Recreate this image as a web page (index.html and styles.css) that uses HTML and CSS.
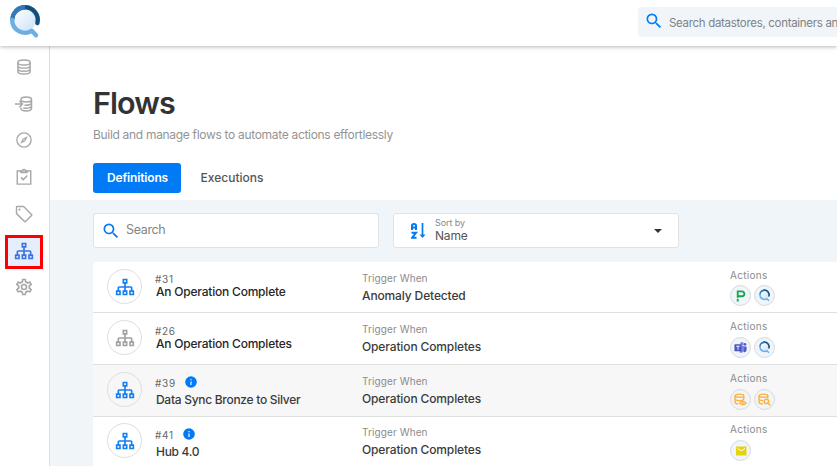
FILE: index.html
```html
<!DOCTYPE html>
<html lang="en">
<head>
<meta charset="utf-8">
<title>Flows</title>
<link rel="stylesheet" href="styles.css">
</head>
<body>
<svg class="sprite" aria-hidden="true">
  <defs>
    <linearGradient id="lens" x1="0" y1="0" x2="1" y2="1"><stop offset="0" stop-color="#fff"/><stop offset="1" stop-color="#c8e2f7"/></linearGradient>
  </defs>
  <symbol id="logo" viewBox="0 0 34 36">
    <circle cx="17" cy="16" r="11" fill="url(#lens)"/>
    <path d="M4.300 16A12.800 12.800 0 0 1 17 3.200" fill="none" stroke="#3279b7" stroke-width="4.400"/>
    <path d="M17 3.200A12.800 12.800 0 0 1 29.400 19" fill="none" stroke="#134f7d" stroke-width="4.400" stroke-linecap="round"/>
    <path d="M17 3.200A12.800 12.800 0 0 0 7.500 7.500" fill="none" stroke="#3279b7" stroke-width="4.400"/>
    <path d="M4.200 16A12.800 12.800 0 0 0 23.800 26.800L28 31.300" fill="none" stroke="#6daee3" stroke-width="4.400" stroke-linecap="round" stroke-linejoin="round"/>
  </symbol>
  <symbol id="database" viewBox="0 0 24 24"><g fill="none" stroke="currentColor" stroke-width="1.900"><ellipse cx="12" cy="6" rx="8.200" ry="3.400"/><path d="M3.800 6v12c0 1.900 3.600 3.400 8.200 3.400s8.200-1.500 8.200-3.400V6M3.800 10.200c0 1.900 3.600 3.300 8.200 3.300s8.200-1.400 8.200-3.300M3.800 14.400c0 1.900 3.600 3.300 8.200 3.300s8.200-1.400 8.200-3.300"/></g></symbol>
  <symbol id="import" viewBox="0 0 24 24"><g fill="none" stroke="currentColor" stroke-width="2"><path d="M8 7V6c0-1.800 3-3.300 6.900-3.300S22 4.200 22 6v12c0 1.800-3.200 3.200-7.100 3.200S8 19.800 8 18v-1.500M8 6c0 1.900 3.100 3.300 7 3.300s7-1.400 7-3.300M12.500 13.500c5 .4 9.500-.8 9.500-3.200M11 17.200c5.500 1.200 11-.2 11-3M0 12h10M5.800 7.700 10 12l-4.200 4.300"/></g></symbol>
  <symbol id="compass" viewBox="0 0 24 24"><circle cx="12" cy="12" r="9.500" fill="none" stroke="currentColor" stroke-width="1.800"/><path fill="currentColor" fill-rule="evenodd" d="m17 7-3.200 6.800L7 17l3.200-6.800zM12 11a1 1 0 1 0 0 2 1 1 0 0 0 0-2z"/></symbol>
  <symbol id="clipboard" viewBox="0 0 24 24"><path fill="none" stroke="currentColor" stroke-width="1.900" d="M3 4h18v17.500H3zM8 12.500l3 3 5.500-5.500"/><path fill="currentColor" d="M7 3h2.200a3 3 0 0 1 5.600 0H17v4H7z"/><circle cx="12" cy="4" r=".9" fill="#fff"/></symbol>
  <symbol id="tag" viewBox="0 0 24 24"><path fill="none" stroke="currentColor" stroke-width="1.900" stroke-linejoin="round" d="M3 2h8.500L22 12.700a1 1 0 0 1 0 1.400l-7.900 7.900a1 1 0 0 1-1.400 0L2 11.500V3a1 1 0 0 1 1-1z"/><circle cx="6" cy="6" r="1.500" fill="currentColor"/></symbol>
  <symbol id="sitemap" viewBox="0 0 24 24"><path fill="currentColor" d="M9 2V8H11V11H5C3.890 11 3 11.890 3 13V16H1V22H7V16H5V13H11V16H9V22H15V16H13V13H19V16H17V22H23V16H21V13C21 11.890 20.110 11 19 11H13V8H15V2H9M11 4H13V6H11V4M3 18H5V20H3V18M11 18H13V20H11V18M19 18H21V20H19V18Z"/></symbol>
  <symbol id="cog" viewBox="0 0 24 24"><path fill="currentColor" d="M12,8A4,4 0 0,1 16,12A4,4 0 0,1 12,16A4,4 0 0,1 8,12A4,4 0 0,1 12,8M12,10A2,2 0 0,0 10,12A2,2 0 0,0 12,14A2,2 0 0,0 14,12A2,2 0 0,0 12,10M10,22C9.750,22 9.540,21.820 9.500,21.580L9.130,18.930C8.500,18.680 7.960,18.340 7.440,17.940L4.950,18.950C4.730,19.030 4.460,18.950 4.340,18.730L2.340,15.270C2.210,15.050 2.270,14.780 2.460,14.630L4.570,12.970L4.500,12L4.570,11L2.460,9.370C2.270,9.220 2.210,8.950 2.340,8.730L4.340,5.270C4.460,5.050 4.730,4.960 4.950,5.050L7.440,6.050C7.960,5.660 8.500,5.320 9.130,5.070L9.500,2.420C9.540,2.180 9.750,2 10,2H14C14.250,2 14.460,2.180 14.500,2.420L14.870,5.070C15.500,5.320 16.040,5.660 16.560,6.050L19.050,5.050C19.270,4.960 19.540,5.050 19.660,5.270L21.660,8.730C21.790,8.950 21.730,9.220 21.540,9.370L19.430,11L19.500,12L19.430,13L21.540,14.630C21.730,14.780 21.790,15.050 21.660,15.270L19.660,18.730C19.540,18.950 19.270,19.040 19.050,18.950L16.560,17.950C16.040,18.340 15.500,18.680 14.870,18.930L14.500,21.580C14.460,21.820 14.250,22 14,22H10M11.250,4L10.880,6.610C9.680,6.860 8.620,7.500 7.850,8.390L5.440,7.350L4.690,8.650L6.800,10.200C6.400,11.370 6.400,12.640 6.800,13.800L4.680,15.360L5.430,16.660L7.860,15.620C8.630,16.500 9.680,17.140 10.870,17.380L11.240,20H12.760L13.130,17.390C14.320,17.140 15.370,16.500 16.140,15.620L18.570,16.660L19.320,15.360L17.200,13.810C17.600,12.640 17.600,11.370 17.200,10.200L19.310,8.650L18.560,7.350L16.150,8.390C15.380,7.500 14.320,6.860 13.120,6.620L12.750,4H11.250Z"/></symbol>
  <symbol id="magnify" viewBox="0 0 24 24"><path fill="currentColor" d="M9.500,3A6.500,6.500 0 0,1 16,9.500C16,11.110 15.410,12.590 14.440,13.730L14.710,14H15.500L20.500,19L19,20.500L14,15.500V14.710L13.730,14.440C12.590,15.410 11.110,16 9.500,16A6.500,6.500 0 0,1 3,9.500A6.500,6.500 0 0,1 9.500,3M9.500,5C7,5 5,7 5,9.500C5,12 7,14 9.500,14C12,14 14,12 14,9.500C14,7 12,5 9.500,5Z"/></symbol>
  <symbol id="info" viewBox="0 0 24 24"><path fill="currentColor" d="M13,9H11V7H13M13,17H11V11H13M12,2A10,10 0 0,0 2,12A10,10 0 0,0 12,22A10,10 0 0,0 22,12A10,10 0 0,0 12,2Z"/></symbol>
  <symbol id="sort" viewBox="0 0 15 16"><g fill="none" stroke="currentColor" stroke-width="2"><path d="M1 7V2.500Q1 1 3 1t2 1.500V7M1 4.500h4M.5 9.800H5L1.200 14.700H5.500"/><path d="M11.500 0v13" stroke-width="1.700"/></g><path fill="currentColor" d="M8.500 11.500h6l-3 3.500z"/></symbol>
  <symbol id="pagerduty" viewBox="0 0 14 14"><path fill="none" stroke="#12a84b" stroke-width="2" d="M4 9.500V2.500h4.500a2.500 2.500 0 0 1 0 5.300H4"/><path stroke="#12a84b" stroke-width="2" d="M4 10.500V13.500"/></symbol>
  <symbol id="teams" viewBox="0 0 14 14"><circle cx="8.500" cy="3" r="2" fill="#7b83eb"/><circle cx="11.800" cy="3.600" r="1.400" fill="#5059c9"/><path fill="#5059c9" d="M9 5.800h4.500v4a2.300 2.300 0 0 1-3 2z"/><path fill="#7b83eb" d="M6 5.500h5v4.300a3.500 3.500 0 0 1-5 2.500z"/><rect x=".5" y="3.500" width="7.500" height="7.500" rx=".6" fill="#4b53bc"/><path d="M2.300 5.600h4M4.300 5.600v4" stroke="#fff" stroke-width="1"/></symbol>
  <symbol id="db-eye" viewBox="0 0 24 24"><g fill="none" stroke="currentColor" stroke-width="2.600"><ellipse cx="10" cy="5" rx="8" ry="3"/><path d="M2 5v12c0 2 3 3.200 6 3.200M18 5v7M2 11c1 2 4 3 8 3s7-1 8-3"/><path d="M10.500 18.500q6-7 12 0q-6 6-12 0z" stroke-width="2.200"/></g><circle cx="16.500" cy="18.400" r="1.700" fill="currentColor"/></symbol>
  <symbol id="db-search" viewBox="0 0 24 24"><g fill="none" stroke="currentColor" stroke-width="2.600"><ellipse cx="10" cy="5" rx="8" ry="3"/><path d="M2 5v12c0 2 3 3.200 7 3.200M18 5v5M2 11c1 2 4 3 7.500 3"/><circle cx="15.500" cy="15.500" r="4"/><path d="m18.300 18.500 4.700 4.700"/></g></symbol>
  <symbol id="mail" viewBox="0 0 24 24"><path fill="currentColor" d="M2 3h21v18H2z"/><path d="M5 6.500q7.500 9 15 0" fill="none" stroke="#fff" stroke-width="2"/></symbol>
</svg>

<header class="topbar">
  <svg class="logo"><use href="#logo"/></svg>
  <div class="global-search"><svg class="ico"><use href="#magnify"/></svg><span>Search datastores, containers and fields</span></div>
</header>
<div class="shell">
  <nav class="sidebar">
    <a class="nav-item"><svg class="ico"><use href="#database"/></svg></a>
    <a class="nav-item"><svg class="ico"><use href="#import"/></svg></a>
    <a class="nav-item"><svg class="ico"><use href="#compass"/></svg></a>
    <a class="nav-item"><svg class="ico"><use href="#clipboard"/></svg></a>
    <a class="nav-item"><svg class="ico"><use href="#tag"/></svg></a>
    <a class="nav-item active"><svg class="ico"><use href="#sitemap"/></svg></a>
    <a class="nav-item"><svg class="ico"><use href="#cog"/></svg></a>
  </nav>
  <main class="main">
    <section class="intro">
      <h1>Flows</h1>
      <p class="lead">Build and manage flows to automate actions effortlessly</p>
      <div class="tabs"><a class="tab selected">Definitions</a><a class="tab">Executions</a></div>
    </section>
    <section class="content">
      <div class="filters">
        <div class="field search"><svg class="ico"><use href="#magnify"/></svg><span>Search</span></div>
        <div class="field sort"><svg class="sort-ico"><use href="#sort"/></svg><div class="sort-text"><small>Sort by</small><span>Name</span></div><i class="caret"></i></div>
      </div>
      <div class="list">
        <article class="row first">
          <div class="badge"><svg class="ico"><use href="#sitemap"/></svg></div>
          <div class="flow"><div class="id">#31</div><div class="name">An Operation Complete</div></div>
          <div class="trigger"><div class="label">Trigger When</div><div class="value">Anomaly Detected</div></div>
          <div class="actions"><div class="label">Actions</div><div class="chips"><span class="chip"><svg><use href="#pagerduty"/></svg></span><span class="chip"><svg><use href="#logo"/></svg></span></div></div>
        </article>
        <article class="row">
          <div class="badge off"><svg class="ico"><use href="#sitemap"/></svg></div>
          <div class="flow"><div class="id">#26</div><div class="name">An Operation Completes</div></div>
          <div class="trigger"><div class="label">Trigger When</div><div class="value">Operation Completes</div></div>
          <div class="actions"><div class="label">Actions</div><div class="chips"><span class="chip"><svg><use href="#teams"/></svg></span><span class="chip"><svg><use href="#logo"/></svg></span></div></div>
        </article>
        <article class="row hover">
          <div class="badge"><svg class="ico"><use href="#sitemap"/></svg></div>
          <div class="flow noted"><div class="id">#39<svg class="note"><use href="#info"/></svg></div><div class="name">Data Sync Bronze to Silver</div></div>
          <div class="trigger"><div class="label">Trigger When</div><div class="value">Operation Completes</div></div>
          <div class="actions"><div class="label">Actions</div><div class="chips"><span class="chip data"><svg><use href="#db-eye"/></svg></span><span class="chip data"><svg><use href="#db-search"/></svg></span></div></div>
        </article>
        <article class="row last">
          <div class="badge"><svg class="ico"><use href="#sitemap"/></svg></div>
          <div class="flow noted"><div class="id">#41<svg class="note"><use href="#info"/></svg></div><div class="name">Hub 4.0</div></div>
          <div class="trigger"><div class="label">Trigger When</div><div class="value">Operation Completes</div></div>
          <div class="actions"><div class="label">Actions</div><div class="chips"><span class="chip mail"><svg><use href="#mail"/></svg></span></div></div>
        </article>
      </div>
    </section>
  </main>
</div>
</body>
</html>
```
FILE: styles.css
```css
* { box-sizing: border-box; }
body { margin: 0; height: 466px; overflow: hidden; display: flex; flex-direction: column; background: #fff; color: #333; font-family: Inter, "Liberation Sans", sans-serif; font-size: 12px; }
svg { display: block; flex: none; }
.sprite { position: absolute; width: 0; height: 0; }
.ico { width: 20px; height: 20px; }

.topbar { flex: none; height: 46px; position: relative; z-index: 1; display: flex; justify-content: space-between; background: #fff; box-shadow: 0 1px 4px rgba(0,0,0,.28); }
.logo { width: 34px; height: 36px; margin: 4px 0 0 8px; }
.global-search { width: 199px; height: 30px; margin-top: 7px; padding-left: 6px; display: flex; align-items: center; gap: 5px; border-radius: 4px 0 0 4px; background: #f0f5f9; color: #7d8387; font-size: 11.500px; letter-spacing: -.31px; white-space: nowrap; overflow: hidden; }
.global-search .ico { color: #007bf5; margin-top: -2px; }
.global-search span { padding-top: 2px; }

.shell { flex: 1; min-height: 0; display: flex; }
.sidebar { width: 50px; flex: none; padding: 4px 1px 0 0; border-right: 1px solid #ddd; display: flex; flex-direction: column; align-items: center; gap: 2.700px; }
.nav-item { width: 38px; height: 34px; display: flex; align-items: center; justify-content: center; color: #a8a8a8; }
.nav-item .ico { width: 18px; height: 18px; }
.nav-item:last-child .ico { width: 20px; height: 20px; }
.nav-item.active { margin: 1.500px 0 -1.500px; padding-bottom: 2px; border: 3px solid #f00; background: #e6eefb; color: #3b73e0; }
.nav-item.active .ico { width: 20px; height: 20px; }

.main { flex: 1; min-width: 0; display: flex; flex-direction: column; }
.intro { height: 154px; flex: none; padding: 38px 0 0 43px; }
h1 { margin: 0; font-size: 30.500px; line-height: 38px; font-weight: 600; color: #333; letter-spacing: -.9px; }
.lead { margin: 5px 0 0; line-height: 16px; color: #949494; letter-spacing: -.31px; }
.tabs { display: flex; margin-top: 20px; gap: 7px; }
.tab { width: 88px; height: 30px; line-height: 30px; text-align: center; border-radius: 3px; font-weight: 500; color: #555; }
.tab.selected { background: #007bf5; color: #fff; font-weight: 600; letter-spacing: -.15px; padding-left: 1px; }
.content { flex: 1; min-height: 0; padding: 13px 0 0 43px; background: #f0f5f9; }
.filters { display: flex; gap: 14px; }
.field { width: 286px; height: 35px; border: 1px solid #e0e2e4; border-radius: 3px; background: #fff; display: flex; align-items: center; }
.search { padding: 0 0 3px 7px; gap: 5px; color: #858585; font-size: 12.500px; letter-spacing: -.35px; }
.search .ico { color: #007bf5; margin-top: 3px; }
.sort { padding: 0 16px 0 17px; }
.sort-ico { width: 15px; height: 16px; color: #007bf5; }
.sort-text { margin: -2px 0 0 9px; flex: 1; display: flex; flex-direction: column; color: #555; }
.sort-text small { font-size: 9px; line-height: 11px; color: #888; letter-spacing: -.1px; }
.sort-text span { line-height: 15px; letter-spacing: -.2px; }
.caret { border: 4.500px solid transparent; border-top-color: #333; border-bottom: 0; }

.list { margin-top: 14px; background: #fff; border-top-left-radius: 4px; }
.row { height: 52px; padding-top: 7px; display: flex; border-bottom: 1px solid #dfdfdf; }
.row.first { height: 51px; }
.row.last { padding-top: 6px; }
.row.hover { background: #f7f7f7; }
.badge { width: 35px; height: 35px; margin-left: 14px; border: 1px solid #dedede; border-radius: 50%; display: flex; align-items: center; justify-content: center; background: #fff; color: #167ff0; }
.hover .badge { background: #f7f7f7; }
.badge.off { color: #a1a1a1; }
.flow { width: 207px; margin-left: 13px; padding-top: 5px; }
.first .flow { padding-top: 4px; }
.flow.noted { padding-top: 3px; }
.last .flow.noted { padding-top: 4px; }
.id { display: flex; align-items: center; gap: 8px; height: 12px; line-height: 12px; font-size: 10px; color: #666; letter-spacing: .7px; }
.noted .id { height: 16px; }
.note { width: 14px; height: 14px; margin-top: -3px; color: #007bf5; }
.name { margin-top: -1px; padding-left: 1px; line-height: 15px; font-weight: 500; letter-spacing: -.21px; color: #262626; }
.noted .name { margin-top: 0; line-height: 18px; letter-spacing: -.29px; color: #3b3b3b; }
.trigger { width: 368px; padding-top: 2px; }
.label { line-height: 14px; font-size: 10px; color: #8b8b8b; letter-spacing: .1px; }
.value { margin-top: 2px; line-height: 17px; font-weight: 500; color: #3b3b3b; letter-spacing: -.13px; }
.actions { padding-top: 0; }
.actions .label { margin-top: -1px; letter-spacing: .3px; }
.first .label { position: relative; top: 0; }
.chips { display: flex; gap: 3px; margin-top: 4px; }
.first .chips { margin-top: 3px; }
.first .trigger { padding-top: 2px; }
.chip { width: 21px; height: 21px; border: 1px solid #d6dadf; border-radius: 50%; background: #f0f5f9; display: flex; align-items: center; justify-content: center; }
.chip svg { width: 13px; height: 13px; }
.data { color: #ffb13b; }
.mail { color: #e8d10d; }
.mail svg { width: 12px; height: 12px; }
```
